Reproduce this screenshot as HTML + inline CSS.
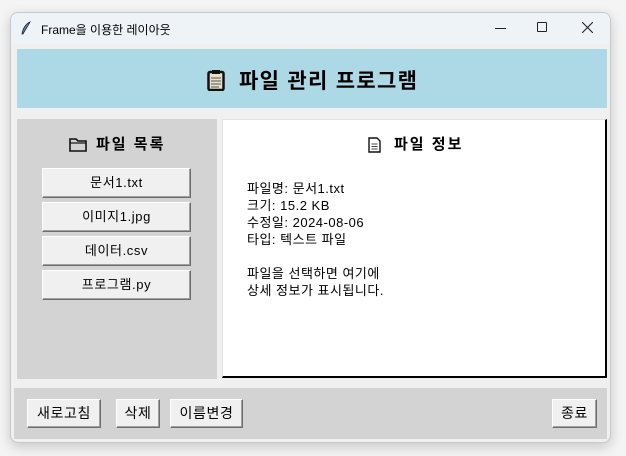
<!DOCTYPE html>
<html><head><meta charset="utf-8"><style>
*{margin:0;padding:0;box-sizing:border-box}
body{width:626px;height:456px;background:#f4f4f4;position:relative;overflow:hidden;font-family:"Liberation Sans","Noto Sans CJK KR",sans-serif;color:#000}
.win{position:absolute;left:10px;top:12px;width:601px;height:431px;background:#f0f0f0;border:1px solid #c8c8c8;border-radius:8px;box-shadow:0 4px 12px rgba(0,0,0,.18);overflow:hidden}
.tb{position:absolute;left:0;top:0;width:100%;height:31px;background:#eef3f8;font-size:12px}
.tb .t{position:absolute;left:30px;top:8px}
.a{position:absolute;white-space:nowrap}
.btn{position:absolute;background:#f0f0f0;border:1px solid;border-color:#fff #6d6d6d #6d6d6d #fff;box-shadow:inset -1px -1px 0 #a0a0a0;font-size:13px;text-align:center;letter-spacing:.6px}
.info{font-size:13px;line-height:17px;letter-spacing:.5px}
</style></head><body>
<div class="win">
<div class="tb">
<svg class="a" style="left:9px;top:8px" width="12" height="15" viewBox="0 0 12 15"><path d="M10 1C6 3 3 7 2 13L3 13C5 9 8 5 10 1Z" fill="#5b8fd0" stroke="#222" stroke-width=".8"/></svg>
<span class="t">Frame을 이용한 레이아웃</span>
<div class="a" style="left:484px;top:15px;width:11px;height:1px;background:#222"></div>
<div class="a" style="left:526px;top:9px;width:10px;height:10px;border:1px solid #222;border-radius:1px"></div>
<svg class="a" style="left:571px;top:9px" width="11" height="11"><path d="M0 0L11 11M11 0L0 11" stroke="#222" stroke-width="1.1"/></svg>
</div>
<div class="a" style="left:6px;top:36px;width:590px;height:59px;background:#add8e6"></div>
<svg class="a" style="left:196px;top:56px" width="18" height="22" viewBox="0 0 18 22"><rect x="1.5" y="3" width="15" height="18" rx="1.5" fill="#e8e0c8" stroke="#111" stroke-width="2.5"/><rect x="5" y="1" width="8" height="4" fill="#111"/><path d="M4 9h10M4 12h10M4 15h10M4 18h8" stroke="#555" stroke-width="1"/></svg>
<div class="a" style="left:228px;top:52px;font-size:21px;font-weight:bold;letter-spacing:1.3px">파일 관리 프로그램</div>

<div class="a" style="left:6px;top:106px;width:200px;height:260px;background:#d3d3d3"></div>
<svg class="a" style="left:58px;top:124px" width="18" height="15" viewBox="0 0 18 15"><path d="M1 2h6l2 2h8v10H1Z" fill="none" stroke="#111" stroke-width="1.6"/><path d="M1 6h16" stroke="#111" stroke-width="1.2"/></svg>
<div class="a" style="left:85px;top:120px;font-size:15px;font-weight:bold;letter-spacing:2px">파일 목록</div>
<div class="btn" style="left:31px;top:155px;width:149px;height:30px;line-height:27px">문서1.txt</div>
<div class="btn" style="left:31px;top:189px;width:149px;height:30px;line-height:27px">이미지1.jpg</div>
<div class="btn" style="left:31px;top:223px;width:149px;height:30px;line-height:27px">데이터.csv</div>
<div class="btn" style="left:31px;top:257px;width:149px;height:30px;line-height:27px">프로그램.py</div>

<div class="a" style="left:211px;top:106px;width:385px;height:259px;background:#fff;border:1px solid;border-color:#e3e3e3 #000 #000 #e3e3e3;border-width:1px 2px 2px 1px"></div>
<svg class="a" style="left:357px;top:124px" width="13" height="16" viewBox="0 0 13 16"><path d="M1 1h8l3 3v11H1Z" fill="#fff" stroke="#111" stroke-width="1.4"/><path d="M3.5 7h6M3.5 9.5h6M3.5 12h6" stroke="#444"/></svg>
<div class="a" style="left:383px;top:120px;font-size:15px;font-weight:bold;letter-spacing:2px">파일 정보</div>
<div class="a info" style="left:236px;top:167px">파일명: 문서1.txt<br>크기: 15.2 KB<br>수정일: 2024-08-06<br>타입: 텍스트 파일<br><br>파일을 선택하면 여기에<br>상세 정보가 표시됩니다.</div>

<div class="a" style="left:3px;top:375px;width:593px;height:51px;background:#d3d3d3"></div>
<div class="btn" style="left:16px;top:386px;width:74px;height:29px;line-height:26px;font-size:14px">새로고침</div>
<div class="btn" style="left:105px;top:386px;width:44px;height:29px;line-height:26px;font-size:14px">삭제</div>
<div class="btn" style="left:159px;top:386px;width:73px;height:29px;line-height:26px;font-size:14px">이름변경</div>
<div class="btn" style="left:541px;top:386px;width:45px;height:29px;line-height:26px;font-size:14px">종료</div>
</div>
</body></html>
